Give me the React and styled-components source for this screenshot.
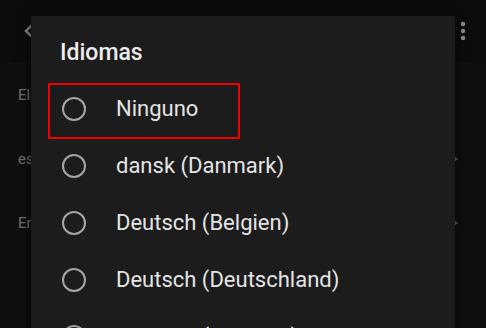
import React from "react";
import styled, { createGlobalStyle } from "styled-components";

const Global = createGlobalStyle`
  html, body { margin: 0; padding: 0; background: #0d0d0d; }
  body { font-family: Roboto, "Liberation Sans", sans-serif; overflow: hidden; }
  #root { width: 486px; height: 328px; }
`;

const Screen = styled.div`
  position: relative;
  width: 486px;
  height: 328px;
  overflow: hidden;
  background: #0f0f0f;
`;

const AppBar = styled.div`
  height: 63px;
  display: flex;
  align-items: center;
  justify-content: space-between;
  padding: 0 20px 0 22px;
  box-sizing: border-box;
  background: #0c0c0c;
  color: #8c8c8c;
`;

const BarTitle = styled.span`
  flex: 1;
  margin-left: 28px;
  font-size: 18px;
  color: #cfcfcf;
`;

const SettingRow = styled.div`
  height: 64px;
  display: flex;
  align-items: center;
  justify-content: space-between;
  padding: 0 28px 0 18px;
  box-sizing: border-box;
  font-size: 15px;
  color: #6f6f6f;
`;

const Caret = styled.span`
  width: 0;
  height: 0;
  border-top: 4px solid transparent;
  border-bottom: 4px solid transparent;
  border-left: 5px solid ${(p) => (p.$show ? "#5a5a5a" : "transparent")};
`;

const Dialog = styled.div`
  position: absolute;
  left: 31px;
  top: 16px;
  width: 424px;
  bottom: -40px;
  background: #1c1c1c;
  box-shadow: 0 0 12px rgba(0, 0, 0, 0.6);
  padding-top: 22px;
  box-sizing: border-box;
`;

const Title = styled.h2`
  margin: 0 0 12px 29px;
  font-size: 23px;
  line-height: 30px;
  font-weight: 500;
  color: #ececec;
`;

const Option = styled.div`
  position: relative;
  height: 57px;
  display: flex;
  align-items: center;
  padding-left: 31px;
  box-sizing: border-box;
`;

const Radio = styled.span`
  width: 24px;
  height: 24px;
  border: 2px solid #a6a6a6;
  border-radius: 50%;
  box-sizing: border-box;
  flex-shrink: 0;
`;

const Label = styled.span`
  margin-left: 30px;
  font-size: 22px;
  color: #e4e4e4;
  white-space: nowrap;
`;

const Highlight = styled.div`
  position: absolute;
  left: 17px;
  top: 3px;
  width: 192px;
  height: 56px;
  border: 2.5px solid #f00000;
  box-sizing: border-box;
  pointer-events: none;
`;

const BackIcon = () => (
  <svg width="14" height="16" viewBox="0 0 14 16" style={{ marginTop: "-1px" }}>
    <path d="M10 2 L4 8 L10 14" fill="none" stroke="#8a8a8a" strokeWidth="2.4" />
  </svg>
);

const DotsIcon = () => (
  <svg width="6" height="20" viewBox="0 0 6 20" style={{ marginTop: "-2px" }}>
    <circle cx="3" cy="3" r="2.2" fill="#8e8e8e" />
    <circle cx="3" cy="10" r="2.2" fill="#8e8e8e" />
    <circle cx="3" cy="17" r="2.2" fill="#8e8e8e" />
  </svg>
);

const settings = [
  { text: "Elegir idiomas", caret: false },
  { text: "español (España)", caret: true },
  { text: "English (United States)", caret: true },
];

const languages = [
  "Ninguno",
  "dansk (Danmark)",
  "Deutsch (Belgien)",
  "Deutsch (Deutschland)",
  "Deutsch (Schweiz)",
];

export default function App() {
  return (
    <Screen>
      <Global />
      <AppBar>
        <BackIcon />
        <BarTitle>Idiomas</BarTitle>
        <DotsIcon />
      </AppBar>
      {settings.map((s) => (
        <SettingRow key={s.text}>
          <span>{s.text}</span>
          <Caret $show={s.caret} />
        </SettingRow>
      ))}
      <Dialog>
        <Title>Idiomas</Title>
        {languages.map((l, i) => (
          <Option key={l}>
            {i === 0 && <Highlight />}
            <Radio />
            <Label>{l}</Label>
          </Option>
        ))}
      </Dialog>
    </Screen>
  );
}
